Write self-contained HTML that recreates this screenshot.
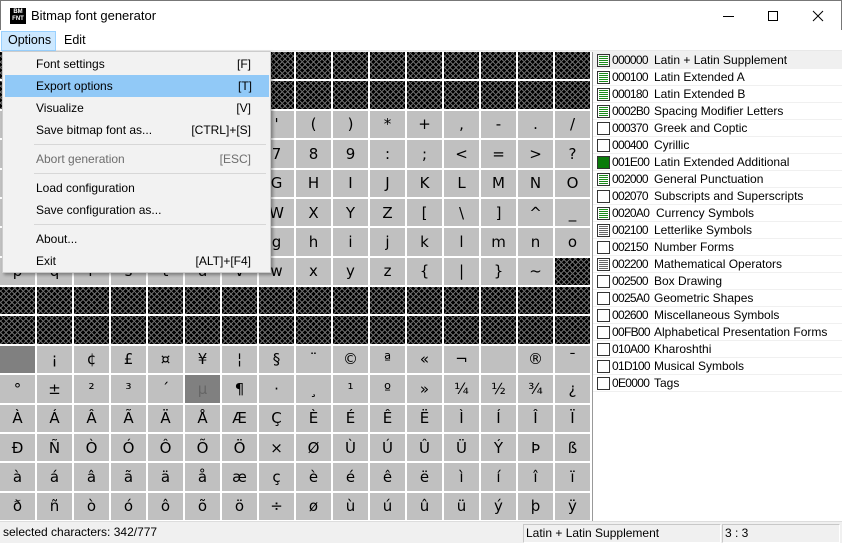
<!DOCTYPE html>
<html><head><meta charset="utf-8"><style>
*{margin:0;padding:0;box-sizing:border-box}
body{width:842px;height:543px;overflow:hidden;background:#f0f0f0;font-family:"Liberation Sans","DejaVu Sans",sans-serif;font-size:12px;position:relative}
#title{position:absolute;left:0;top:0;width:842px;height:30px;background:#fff;border:1px solid #777;border-bottom:none}
#title .t{position:absolute;left:30px;top:7px;font-size:13px;color:#000}
#logo{position:absolute;left:9px;top:7px;width:16px;height:16px;background:#000;color:#fff;font-size:6px;font-weight:bold;line-height:7px;text-align:center;padding-top:1px}
#menubar{position:absolute;left:0;top:30px;width:842px;height:21px;background:#fff;border-bottom:1px solid #e8e8e8}
#menubar span{position:absolute;top:3px;font-size:12.5px}
#grid{position:absolute;left:0;top:52px;width:592px;height:469px;background:#fff;display:grid;grid-template-columns:repeat(16,35px);grid-template-rows:repeat(16,1fr);gap:2px;padding:0 0 1px 0}
#grid div{background:#c0c0c0;color:#000;font-family:"DejaVu Sans",sans-serif;font-size:15px;display:flex;align-items:center;justify-content:center}
#grid div.h{background-color:#000;background-image:repeating-linear-gradient(45deg,#6a6a6a 0 1px,transparent 1px 4px),repeating-linear-gradient(-45deg,#6a6a6a 0 1px,transparent 1px 4px)}
#grid div.d{background:#808080;color:#666}
#list{position:absolute;left:592px;top:52px;width:250px;height:469px;background:#fff;border-left:1px solid #999}
.r{position:relative;height:17px;border-bottom:1px solid #f0f0f0;font-size:12px;line-height:16px;white-space:nowrap}
.r .c{position:absolute;left:4px;top:2px;width:13px;height:13px;border:1px solid #333;background:#fff}
.r .p{background:repeating-linear-gradient(#fff 0 1px,#1a8a1a 1px 2px);background-clip:content-box;padding:1px}
.r .g{background:repeating-linear-gradient(#fff 0 1px,#666 1px 2px);background-clip:content-box;padding:1px}
.r .f{background:#0a7a0a;border-color:#333}
.r .k{position:absolute;left:19px;color:#000;font-size:12px;letter-spacing:-0.7px}
.r .n{position:absolute;left:61px}
#menu{position:absolute;left:2px;top:51px;width:269px;height:222px;background:#f2f2f2;border:1px solid #ccc;box-shadow:2px 2px 3px rgba(0,0,0,.35)}
#menu .i{position:absolute;left:0;width:267px;height:22px;font-size:12px;line-height:22px}
#menu .i .a{position:absolute;left:33px}
#menu .i .b{position:absolute;right:19px}
#menu .sel{background:#91c9f7;left:2px;width:264px}
#menu .dis{color:#6d6d6d}
#menu .sep{position:absolute;left:31px;width:232px;height:1px;background:#d7d7d7}
#status{position:absolute;left:0;top:521px;width:842px;height:22px;background:#f0f0f0;border-top:1px solid #ddd}
#status .s{position:absolute;top:3px;font-size:12px}
.pb{position:absolute;top:2px;height:19px;border:1px solid #c8c8c8;border-right-color:#fff;border-bottom-color:#fff;font-size:12px;line-height:17px;padding-left:2px}
</style></head><body>
<div id="title"><div id="logo">BM<br>FNT</div><span class="t">Bitmap font generator</span>
<svg style="position:absolute;left:700px;top:0" width="142" height="30"><line x1="22" y1="15.5" x2="33" y2="15.5" stroke="#000"/><rect x="67.5" y="10.5" width="9" height="9" fill="none" stroke="#000"/><path d="M112 10L122 20M122 10L112 20" stroke="#000"/></svg></div>
<div id="menubar"><div style="position:absolute;left:1px;top:1px;width:55px;height:20px;background:#cce8ff;border:1px solid #99d1ff"></div><span style="left:8px">Options</span><span style="left:64px">Edit</span></div>
<div id="grid">
<div class="h"></div><div class="h"></div><div class="h"></div><div class="h"></div><div class="h"></div><div class="h"></div><div class="h"></div><div class="h"></div><div class="h"></div><div class="h"></div><div class="h"></div><div class="h"></div><div class="h"></div><div class="h"></div><div class="h"></div><div class="h"></div>
<div class="h"></div><div class="h"></div><div class="h"></div><div class="h"></div><div class="h"></div><div class="h"></div><div class="h"></div><div class="h"></div><div class="h"></div><div class="h"></div><div class="h"></div><div class="h"></div><div class="h"></div><div class="h"></div><div class="h"></div><div class="h"></div>
<div></div><div>!</div><div>"</div><div>#</div><div>$</div><div>%</div><div>&amp;</div><div>'</div><div>(</div><div>)</div><div>*</div><div>+</div><div>,</div><div>-</div><div>.</div><div>/</div>
<div>0</div><div>1</div><div>2</div><div>3</div><div>4</div><div>5</div><div>6</div><div>7</div><div>8</div><div>9</div><div>:</div><div>;</div><div>&lt;</div><div>=</div><div>&gt;</div><div>?</div>
<div>@</div><div>A</div><div>B</div><div>C</div><div>D</div><div>E</div><div>F</div><div>G</div><div>H</div><div>I</div><div>J</div><div>K</div><div>L</div><div>M</div><div>N</div><div>O</div>
<div>P</div><div>Q</div><div>R</div><div>S</div><div>T</div><div>U</div><div>V</div><div>W</div><div>X</div><div>Y</div><div>Z</div><div>[</div><div>\</div><div>]</div><div>^</div><div>_</div>
<div>`</div><div>a</div><div>b</div><div>c</div><div>d</div><div>e</div><div>f</div><div>g</div><div>h</div><div>i</div><div>j</div><div>k</div><div>l</div><div>m</div><div>n</div><div>o</div>
<div>p</div><div>q</div><div>r</div><div>s</div><div>t</div><div>u</div><div>v</div><div>w</div><div>x</div><div>y</div><div>z</div><div>{</div><div>|</div><div>}</div><div>~</div><div class="h"></div>
<div class="h"></div><div class="h"></div><div class="h"></div><div class="h"></div><div class="h"></div><div class="h"></div><div class="h"></div><div class="h"></div><div class="h"></div><div class="h"></div><div class="h"></div><div class="h"></div><div class="h"></div><div class="h"></div><div class="h"></div><div class="h"></div>
<div class="h"></div><div class="h"></div><div class="h"></div><div class="h"></div><div class="h"></div><div class="h"></div><div class="h"></div><div class="h"></div><div class="h"></div><div class="h"></div><div class="h"></div><div class="h"></div><div class="h"></div><div class="h"></div><div class="h"></div><div class="h"></div>
<div class="d"></div><div>¡</div><div>¢</div><div>£</div><div>¤</div><div>¥</div><div>¦</div><div>§</div><div>¨</div><div>©</div><div>ª</div><div>«</div><div>¬</div><div></div><div>®</div><div>¯</div>
<div>°</div><div>±</div><div>²</div><div>³</div><div>´</div><div class="d">µ</div><div>¶</div><div>·</div><div>¸</div><div>¹</div><div>º</div><div>»</div><div>¼</div><div>½</div><div>¾</div><div>¿</div>
<div>À</div><div>Á</div><div>Â</div><div>Ã</div><div>Ä</div><div>Å</div><div>Æ</div><div>Ç</div><div>È</div><div>É</div><div>Ê</div><div>Ë</div><div>Ì</div><div>Í</div><div>Î</div><div>Ï</div>
<div>Ð</div><div>Ñ</div><div>Ò</div><div>Ó</div><div>Ô</div><div>Õ</div><div>Ö</div><div>×</div><div>Ø</div><div>Ù</div><div>Ú</div><div>Û</div><div>Ü</div><div>Ý</div><div>Þ</div><div>ß</div>
<div>à</div><div>á</div><div>â</div><div>ã</div><div>ä</div><div>å</div><div>æ</div><div>ç</div><div>è</div><div>é</div><div>ê</div><div>ë</div><div>ì</div><div>í</div><div>î</div><div>ï</div>
<div>ð</div><div>ñ</div><div>ò</div><div>ó</div><div>ô</div><div>õ</div><div>ö</div><div>÷</div><div>ø</div><div>ù</div><div>ú</div><div>û</div><div>ü</div><div>ý</div><div>þ</div><div>ÿ</div>
</div>
<div id="list">
<div class="r" style="background:#f0f0f0"><span class="c p"></span><span class="k">000000</span><span class="n">Latin + Latin Supplement</span></div>
<div class="r"><span class="c p"></span><span class="k">000100</span><span class="n">Latin Extended A</span></div>
<div class="r"><span class="c p"></span><span class="k">000180</span><span class="n">Latin Extended B</span></div>
<div class="r"><span class="c p"></span><span class="k">0002B0</span><span class="n">Spacing Modifier Letters</span></div>
<div class="r"><span class="c"></span><span class="k">000370</span><span class="n">Greek and Coptic</span></div>
<div class="r"><span class="c"></span><span class="k">000400</span><span class="n">Cyrillic</span></div>
<div class="r"><span class="c f"></span><span class="k">001E00</span><span class="n">Latin Extended Additional</span></div>
<div class="r"><span class="c p"></span><span class="k">002000</span><span class="n">General Punctuation</span></div>
<div class="r"><span class="c"></span><span class="k">002070</span><span class="n">Subscripts and Superscripts</span></div>
<div class="r"><span class="c p"></span><span class="k">0020A0</span><span class="n" style="left:63px">Currency Symbols</span></div>
<div class="r"><span class="c g"></span><span class="k">002100</span><span class="n">Letterlike Symbols</span></div>
<div class="r"><span class="c"></span><span class="k">002150</span><span class="n">Number Forms</span></div>
<div class="r"><span class="c g"></span><span class="k">002200</span><span class="n">Mathematical Operators</span></div>
<div class="r"><span class="c"></span><span class="k">002500</span><span class="n">Box Drawing</span></div>
<div class="r"><span class="c"></span><span class="k">0025A0</span><span class="n">Geometric Shapes</span></div>
<div class="r"><span class="c"></span><span class="k">002600</span><span class="n">Miscellaneous Symbols</span></div>
<div class="r"><span class="c"></span><span class="k">00FB00</span><span class="n">Alphabetical Presentation Forms</span></div>
<div class="r"><span class="c"></span><span class="k">010A00</span><span class="n">Kharoshthi</span></div>
<div class="r"><span class="c"></span><span class="k">01D100</span><span class="n">Musical Symbols</span></div>
<div class="r"><span class="c"></span><span class="k">0E0000</span><span class="n">Tags</span></div>
</div>
<div id="menu">
<div class="i" style="top:1px"><span class="a">Font settings</span><span class="b">[F]</span></div>
<div class="i sel" style="top:23px"><span class="a" style="left:31px">Export options</span><span class="b" style="right:17px">[T]</span></div>
<div class="i" style="top:45px"><span class="a">Visualize</span><span class="b">[V]</span></div>
<div class="i" style="top:67px"><span class="a">Save bitmap font as...</span><span class="b">[CTRL]+[S]</span></div>
<div class="sep" style="top:92px"></div>
<div class="i dis" style="top:96px"><span class="a">Abort generation</span><span class="b">[ESC]</span></div>
<div class="sep" style="top:121px"></div>
<div class="i" style="top:125px"><span class="a">Load configuration</span></div>
<div class="i" style="top:147px"><span class="a">Save configuration as...</span></div>
<div class="sep" style="top:172px"></div>
<div class="i" style="top:176px"><span class="a">About...</span></div>
<div class="i" style="top:198px"><span class="a">Exit</span><span class="b">[ALT]+[F4]</span></div>
</div>
<div id="status"><span class="s" style="left:3px">selected characters: 342/777</span>
<div class="pb" style="left:523px;width:198px">Latin + Latin Supplement</div>
<div class="pb" style="left:722px;width:118px">3 : 3</div></div>
</body></html>
